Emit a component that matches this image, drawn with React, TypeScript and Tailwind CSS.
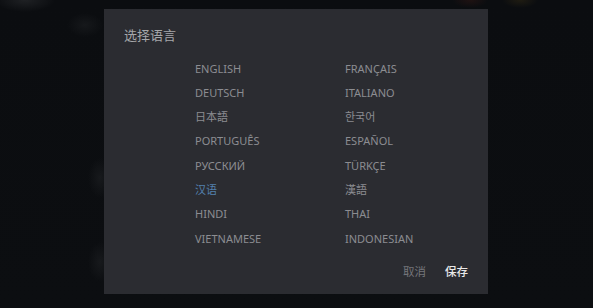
import React from "react";

const left = ["ENGLISH", "DEUTSCH", "日本語", "PORTUGUÊS", "РУССКИЙ", "汉语", "HINDI", "VIETNAMESE"];
const right = ["FRANÇAIS", "ITALIANO", "한국어", "ESPAÑOL", "TÜRKÇE", "漢語", "THAI", "INDONESIAN"];

export default function App() {
  return (
    <div
      className="w-[593px] h-[308px] overflow-hidden bg-[#0b0d10] bg-[radial-gradient(ellipse_30px_12px_at_25px_0px,#1f2124,transparent),radial-gradient(ellipse_18px_12px_at_85px_25px,#16181b,transparent),radial-gradient(ellipse_12px_20px_at_100px_178px,#17191c,transparent),radial-gradient(ellipse_12px_20px_at_100px_262px,#17191c,transparent),radial-gradient(ellipse_18px_8px_at_470px_0px,#1f1212,transparent),radial-gradient(ellipse_18px_8px_at_520px_0px,#1f1c12,transparent),linear-gradient(to_bottom,#0b0d10,#0c0e11)] pt-[9px] pl-[104px] font-['Noto_Sans','Noto_Sans_CJK_SC',sans-serif]"
    >
      <div className="w-[384px] h-[285px] bg-[#2b2c31] flex flex-col">
        <div className="pt-[16px] pl-[20px] text-[13px] leading-[20px] text-[#a6a7aa] font-['Noto_Sans_CJK_SC','Noto_Sans',sans-serif]">
          选择语言
        </div>
        <div className="mt-[11.5px] pl-[91px] grid grid-cols-[150px_auto] text-[11px] text-[#8c8d91]">
          {left.map((l, i) => (
            <React.Fragment key={i}>
              <div className={`h-[24.3px] leading-[24.3px] ${l === "汉语" ? "text-[#5380ad]" : ""}`}>{l}</div>
              <div className="h-[24.3px] leading-[24.3px]">{right[i]}</div>
            </React.Fragment>
          ))}
        </div>
        <div className="mt-[10px] pr-[20px] flex justify-end gap-[19px] text-[11.5px] leading-[20px] font-['Noto_Sans_CJK_SC',sans-serif]">
          <span className="text-[#75767b]">取消</span>
          <span className="text-[#e8e8e8] font-medium">保存</span>
        </div>
      </div>
    </div>
  );
}
